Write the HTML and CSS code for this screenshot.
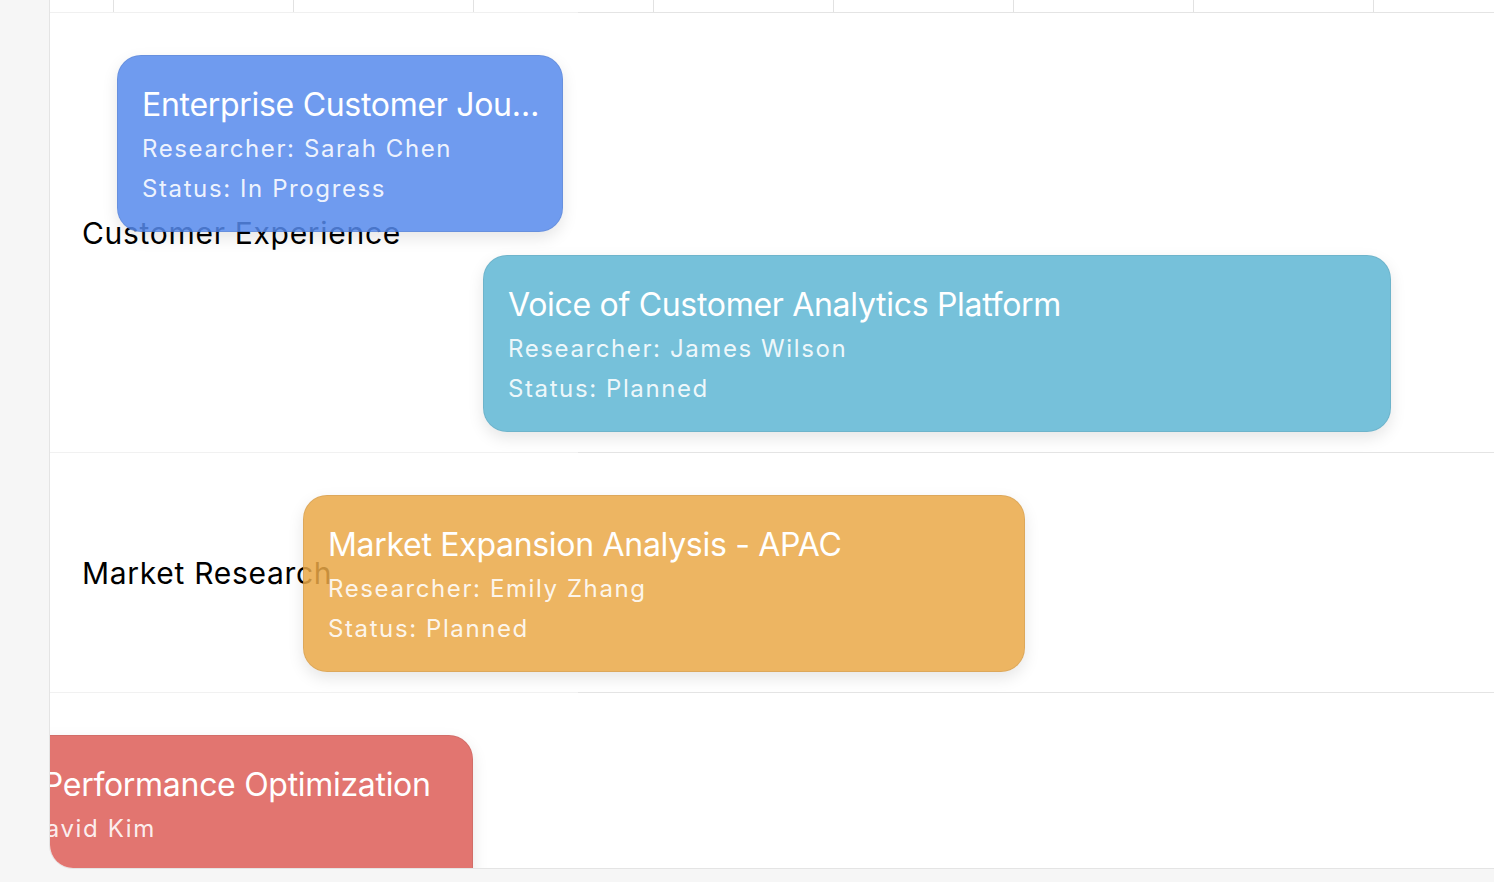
FILE: index.html
```html
<!DOCTYPE html>
<html lang="en">
<head>
<meta charset="utf-8">
<title>Research Timeline</title>
<link rel="stylesheet" href="styles.css">
</head>
<body>
<div class="page">
  <section class="chart">
    <div class="axis">
      <div class="axis-lead"></div>
      <div class="tick"></div>
      <div class="tick"></div>
      <div class="tick"></div>
      <div class="tick"></div>
      <div class="tick"></div>
      <div class="tick"></div>
      <div class="tick"></div>
      <div class="tick"></div>
      <div class="tick"></div>
    </div>

    <div class="group">
      <div class="group-label">Customer Experience</div>
      <div class="group-track"></div>
      <div class="lanes">
        <article class="item item-blue" style="margin-left:67px;width:446px">
          <div class="item-title">Enterprise Customer Journey Mapping</div>
          <div class="item-meta">Researcher: Sarah Chen</div>
          <div class="item-meta">Status: In Progress</div>
        </article>
        <article class="item item-teal" style="margin-left:433px;width:908px">
          <div class="item-title">Voice of Customer Analytics Platform</div>
          <div class="item-meta">Researcher: James Wilson</div>
          <div class="item-meta">Status: Planned</div>
        </article>
      </div>
    </div>

    <div class="group">
      <div class="group-label">Market Research</div>
      <div class="group-track"></div>
      <div class="lanes">
        <article class="item item-orange" style="margin-left:253px;width:722px">
          <div class="item-title">Market Expansion Analysis - APAC</div>
          <div class="item-meta">Researcher: Emily Zhang</div>
          <div class="item-meta">Status: Planned</div>
        </article>
      </div>
    </div>

    <div class="group">
      <div class="group-label"></div>
      <div class="group-track"></div>
      <div class="lanes">
        <article class="item item-red" style="margin-left:-210px;width:633px">
          <div class="item-title">Mobile App Performance Optimization</div>
          <div class="item-meta">Researcher: David Kim</div>
          <div class="item-meta">Status: Done</div>
        </article>
      </div>
    </div>
  </section>
</div>
</body>
</html>
```

FILE: styles.css
```css
html, body {
  margin: 0;
  padding: 0;
}

body {
  height: 882px;
  overflow: hidden;
  background: #f6f6f6;
  font-family: "Inter", "Noto Sans", sans-serif;
}

.page {
  height: 882px;
  display: flex;
  flex-direction: column;
}

.chart {
  box-sizing: border-box;
  flex: none;
  margin: -40px 0 0 49px;
  width: 1620px;
  height: 909px;
  border: 1px solid #e4e4e4;
  border-radius: 24px;
  overflow: hidden;
  background: #ffffff;
  display: flex;
  flex-direction: column;
}

.axis {
  box-sizing: border-box;
  flex: none;
  height: 52px;
  padding-bottom: 1px;
  display: flex;
  background: linear-gradient(to right, #f0f0f0 528px, #e4e4e4 528px) left bottom / 100% 1px no-repeat;
}

.axis-lead {
  flex: none;
  width: 63px;
}

.tick {
  flex: none;
  box-sizing: border-box;
  width: 180px;
  border-left: 1px solid #e2e2e2;
}

.group {
  flex: none;
  display: grid;
  grid-template-columns: 528px 1fr;
}

.group-label {
  grid-column: 1;
  grid-row: 1;
  box-sizing: border-box;
  display: flex;
  align-items: center;
  padding-left: 32px;
  background: #ffffff;
  border-bottom: 1px solid #f1f1f1;
  color: #000000;
  font-size: 30px;
  letter-spacing: 0.7px;
  white-space: nowrap;
}

.group-track {
  grid-column: 2;
  grid-row: 1;
  box-sizing: border-box;
  border-bottom: 1px solid #e4e4e4;
}

.lanes {
  grid-column: 1 / -1;
  grid-row: 1;
  display: flex;
  flex-direction: column;
  align-items: flex-start;
  gap: 23px;
  padding: 42px 0 21px;
}

.item {
  box-sizing: border-box;
  flex: none;
  border: 1px solid rgba(0, 0, 0, 0.07);
  border-radius: 24px;
  padding: 25px 18px 22px 24px;
  box-shadow: 0 6px 16px rgba(0, 0, 0, 0.1);
  color: #ffffff;
  overflow: hidden;
}

.item-blue { background: rgba(86, 137, 236, 0.85); }
.item-teal { background: rgba(94, 182, 212, 0.85); }
.item-orange { background: rgba(234, 168, 70, 0.85); }
.item-red { background: rgba(221, 93, 87, 0.85); }

.item-title {
  font-size: 32px;
  line-height: 48px;
  font-weight: 400;
  letter-spacing: -0.3px;
  white-space: nowrap;
  overflow: hidden;
  text-overflow: ellipsis;
}

.item-meta {
  font-size: 24px;
  line-height: 40px;
  letter-spacing: 1.6px;
  color: rgba(255, 255, 255, 0.9);
  white-space: nowrap;
}
```
